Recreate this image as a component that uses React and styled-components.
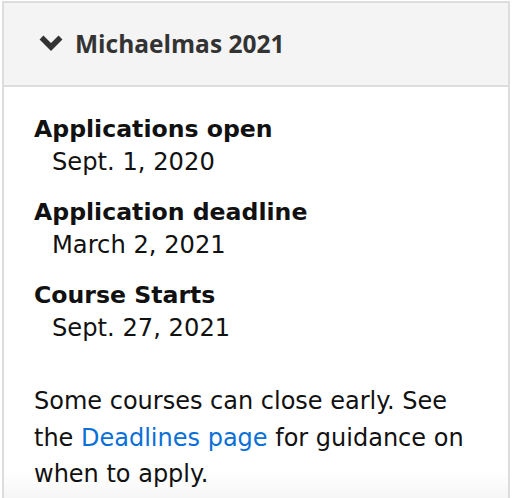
import React from 'react';
import styled, { createGlobalStyle } from 'styled-components';

const GlobalStyle = createGlobalStyle`
  body {
    margin: 0;
    background: #fff;
  }
`;

const Panel = styled.section`
  position: relative;
  margin: 1px 2px 0 2px;
  height: 497px;
  box-sizing: border-box;
  border: 2px solid #dddddd;
  border-bottom: none;
  overflow: hidden;

  &::after {
    content: '';
    position: absolute;
    left: 0;
    right: 0;
    bottom: 0;
    height: 28px;
    background: linear-gradient(to bottom, rgba(0, 0, 0, 0), rgba(0, 0, 0, 0.035));
    pointer-events: none;
  }
`;

const Header = styled.div`
  display: flex;
  align-items: center;
  gap: 11px;
  height: 80px;
  padding: 0 0 2px 34px;
  background: #f4f4f4;
  border-bottom: 2px solid #dddddd;
  font-family: 'Open Sans', 'Liberation Sans', sans-serif;
  font-weight: 700;
  font-size: 24.5px;
  color: #333333;
`;

const Chevron = styled.svg`
  width: 26px;
  height: 20px;
  flex: none;
`;

const Body = styled.div`
  padding: 26px 30px 0 30px;
  font-family: 'DejaVu Sans', Verdana, sans-serif;
  font-size: 24px;
  color: #111111;
`;

const DateList = styled.dl`
  margin: 0;
`;

const Term = styled.dt`
  font-weight: 700;
  line-height: 33px;
  font-size: 23.6px;
`;

const Value = styled.dd`
  margin: 0 0 17px 18px;
  line-height: 33px;
  font-size: 24.2px;
`;

const Note = styled.p`
  margin: 0;
  padding-top: 21px;
  line-height: 36.5px;
`;

const Link = styled.a`
  color: #0a6fd6;
  text-decoration: none;
`;

const dates = [
  ['Applications open', 'Sept. 1, 2020'],
  ['Application deadline', 'March 2, 2021'],
  ['Course Starts', 'Sept. 27, 2021'],
];

export default function App() {
  return (
    <>
      <GlobalStyle />
      <Panel>
        <Header>
          <Chevron viewBox="0 0 26 20">
            <path d="M3.5 4.5 L13 14 L22.5 4.5" fill="none" stroke="#333" strokeWidth="5.5" strokeLinejoin="miter" />
          </Chevron>
          Michaelmas 2021
        </Header>
        <Body>
          <DateList>
            {dates.map(([label, date]) => (
              <React.Fragment key={label}>
                <Term>{label}</Term>
                <Value>{date}</Value>
              </React.Fragment>
            ))}
          </DateList>
          <Note>
            Some courses can close early. See the <Link href="#">Deadlines page</Link> for guidance on when to apply.
          </Note>
        </Body>
      </Panel>
    </>
  );
}
